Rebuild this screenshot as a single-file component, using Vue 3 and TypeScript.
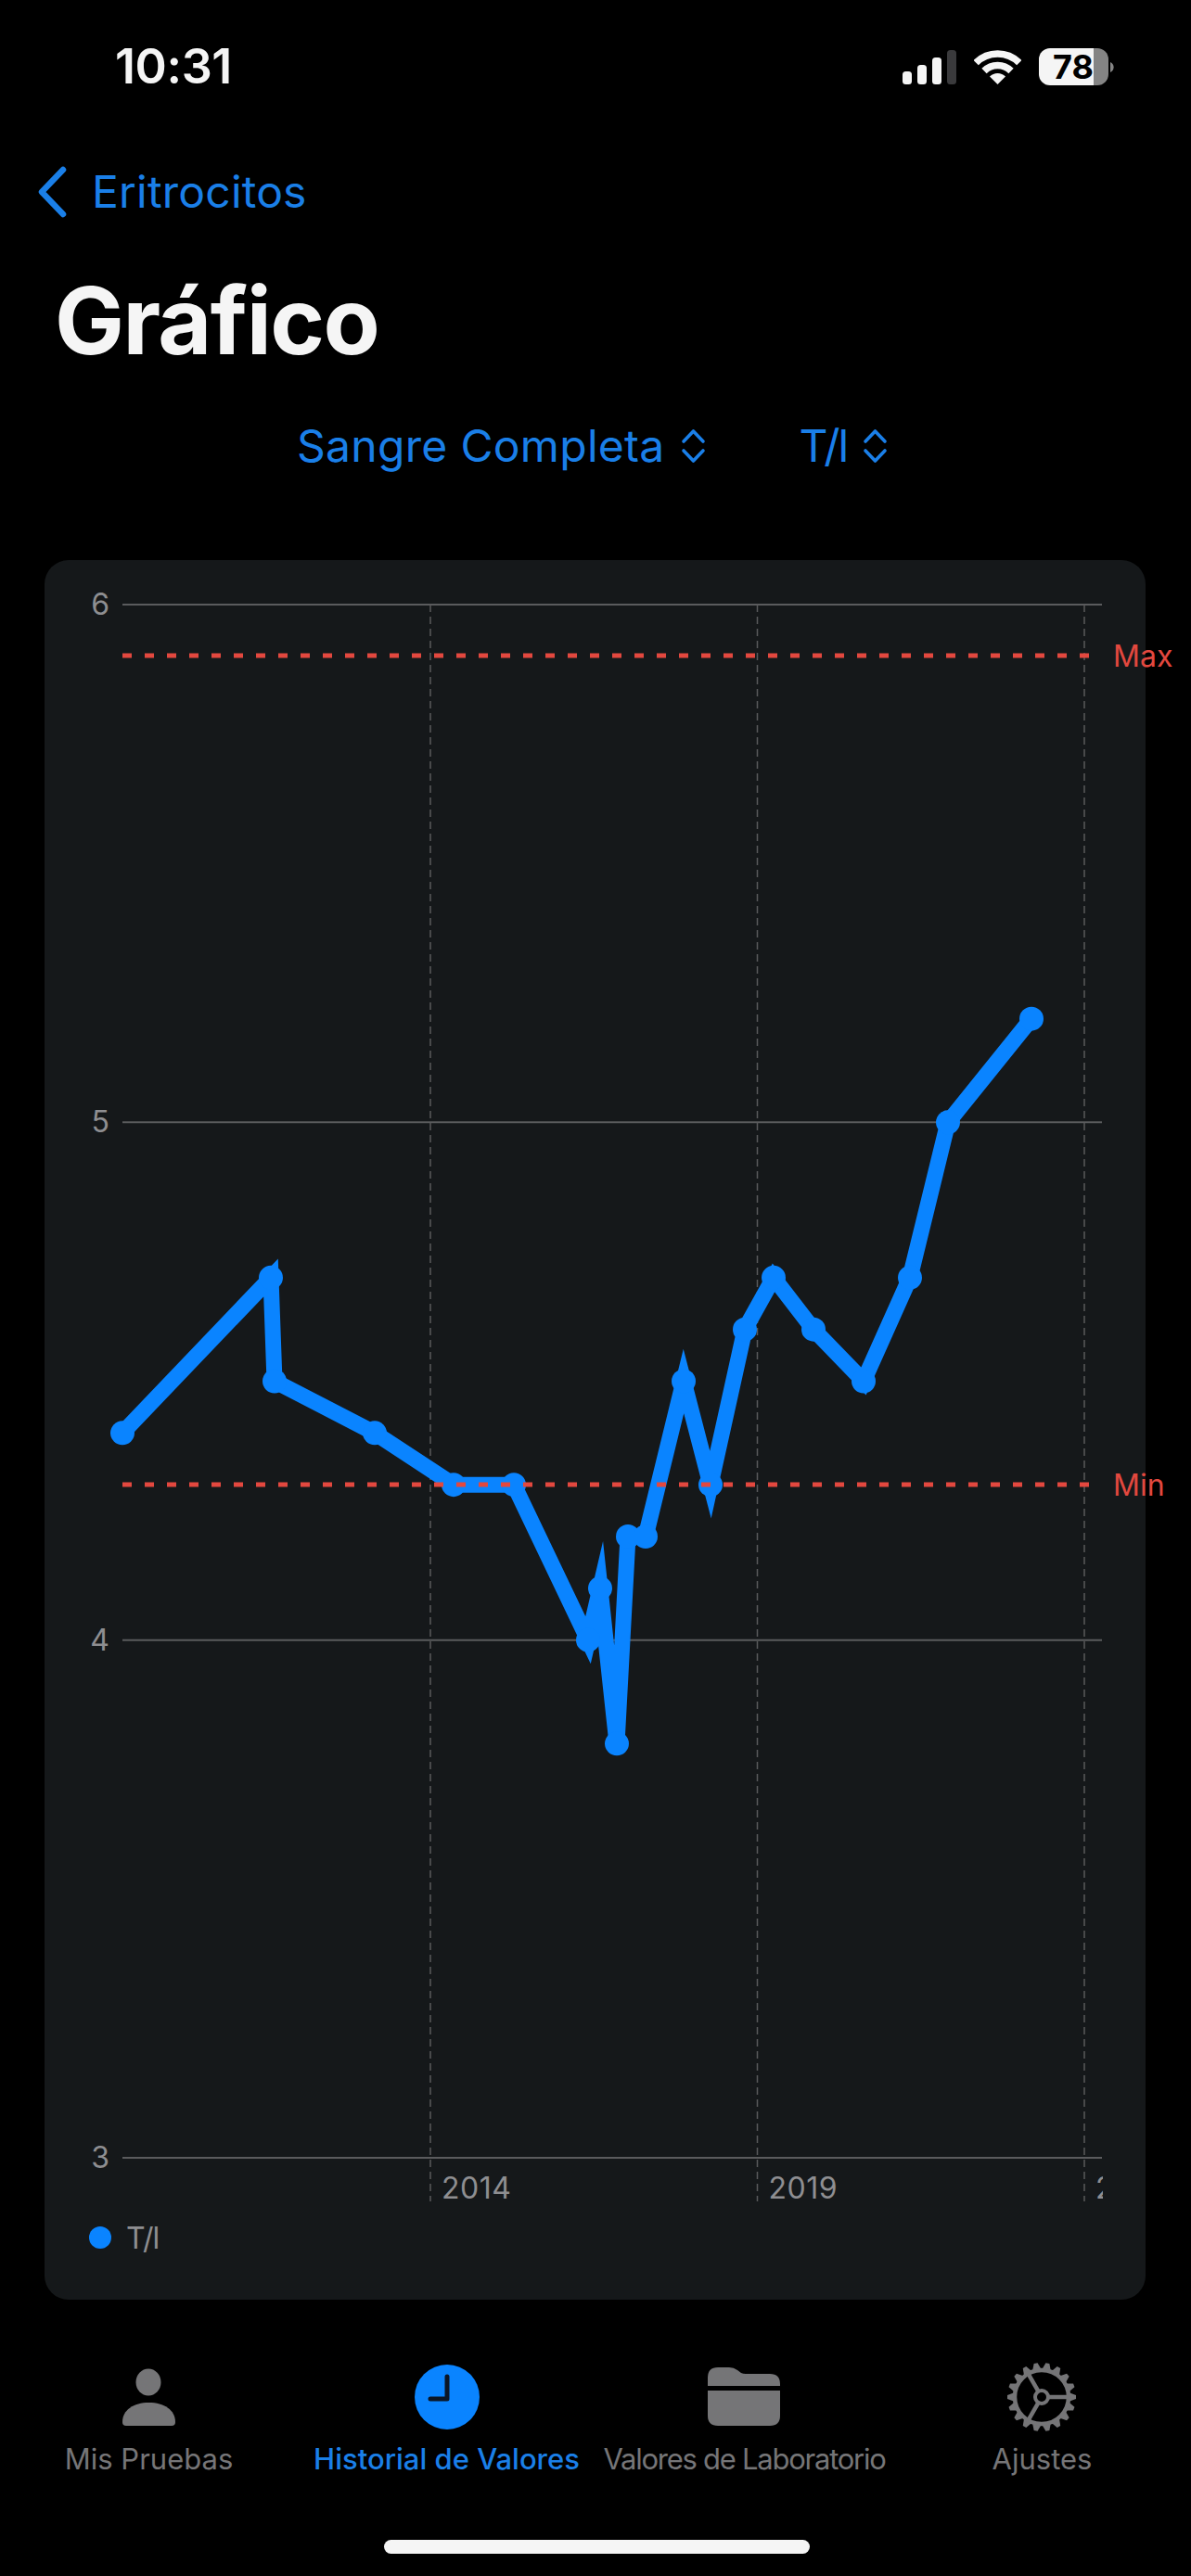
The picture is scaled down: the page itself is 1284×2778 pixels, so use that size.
<script setup lang="ts">
// y axis: 558.33px per unit, value 6 sits at page y 652. Chart svg uses page coordinates.
const yOf = (v: number) => 652 + (6 - v) * 558.33

const samples: [number, number][] = [
  [132, 4.4], [292, 4.7], [296, 4.5], [404, 4.4], [489, 4.3], [554, 4.3],
  [634, 4.0], [647, 4.1], [665, 3.8], [677, 4.2], [696, 4.2], [737, 4.5],
  [766, 4.3], [803, 4.6], [834, 4.7], [877, 4.6], [931, 4.5], [981, 4.7],
  [1022, 5.0], [1112, 5.2],
]
const points = samples.map(([x, v]) => ({ x, y: yOf(v) }))
const linePoints = points.map((p) => `${p.x},${p.y}`).join(' ')

const gridValues = [6, 5, 4, 3]
const yearLines = [
  { x: 464, label: '2014' },
  { x: 816.5, label: '2019' },
  { x: 1169, label: '2024' },
]
const limits = [
  { label: 'Max', y: 707 },
  { label: 'Min', y: 1601 },
]
const teeth = Array.from({ length: 18 }, (_, i) => i * 20)
const spokes = [0, 120, 240]
</script>

<template>
  <div class="screen">
    <header class="status">
      <span class="time">10:31</span>
      <div class="status-icons">
        <svg class="signal" width="58" height="37" viewBox="0 0 58 37">
          <rect x="0" y="23" width="10" height="14" rx="3.5" fill="#f5f5f5" />
          <rect x="16" y="16" width="10" height="21" rx="3.5" fill="#f5f5f5" />
          <rect x="32" y="8" width="10" height="29" rx="3.5" fill="#f5f5f5" />
          <rect x="48" y="0" width="10" height="37" rx="3.5" fill="#3a3a3c" />
        </svg>
        <svg class="wifi" width="51" height="37" viewBox="0 0 51 37">
          <path d="M2.2 13.7A33 33 0 0 1 48.8 13.7" fill="none" stroke="#f5f5f5" stroke-width="7.5" />
          <path d="M11 22.5A20.5 20.5 0 0 1 40 22.5" fill="none" stroke="#f5f5f5" stroke-width="7.5" />
          <path d="M25.5 37L17 28.5A12 12 0 0 1 34 28.5Z" fill="#f5f5f5" />
        </svg>
        <svg class="battery" width="82" height="40" viewBox="0 0 82 40">
          <path d="M12 0H59V40H12A12 12 0 0 1 0 28V12A12 12 0 0 1 12 0Z" fill="#f5f5f5" />
          <path d="M59 0H63A12 12 0 0 1 75 12V28A12 12 0 0 1 63 40H59Z" fill="#848484" />
          <path d="M77 15A6 6 0 0 1 77 26Z" fill="#848484" />
          <text x="37" y="33" text-anchor="middle" class="battery-text">78</text>
        </svg>
      </div>
    </header>

    <nav class="back">
      <svg width="31" height="56" viewBox="0 0 31 56">
        <path d="M27 4L4 28L27 52" fill="none" stroke="#1a7fe8" stroke-width="6.5" stroke-linecap="round" stroke-linejoin="round" />
      </svg>
      <span class="back-label">Eritrocitos</span>
    </nav>

    <h1 class="title">Gráfico</h1>

    <div class="pickers">
      <div class="picker">
        <span class="picker-wide">Sangre Completa</span>
        <svg width="27" height="38" viewBox="0 0 27 38">
          <path d="M3 14L13.5 3L24 14M3 24L13.5 35L24 24" fill="none" stroke="#1a7fe8" stroke-width="3.6" stroke-linecap="round" stroke-linejoin="round" />
        </svg>
      </div>
      <div class="picker">
        <span class="picker-unit">T/l</span>
        <svg width="27" height="38" viewBox="0 0 27 38">
          <path d="M3 14L13.5 3L24 14M3 24L13.5 35L24 24" fill="none" stroke="#1a7fe8" stroke-width="3.6" stroke-linecap="round" stroke-linejoin="round" />
        </svg>
      </div>
    </div>

    <section class="card">
      <svg class="chart" width="1187" height="1780" viewBox="48 604 1187 1780">
        <defs>
          <clipPath id="plot-clip">
            <rect x="48" y="604" width="1141" height="1780" />
          </clipPath>
        </defs>

        <line
          v-for="v in gridValues"
          :key="v"
          x1="132"
          x2="1188"
          :y1="yOf(v)"
          :y2="yOf(v)"
          stroke="#5a5b5d"
          stroke-width="2"
        />
        <text
          v-for="v in gridValues"
          :key="`label-${v}`"
          x="118"
          :y="yOf(v) + 11"
          text-anchor="end"
          class="axis-text"
        >{{ v }}</text>

        <line
          v-for="year in yearLines"
          :key="year.x"
          :x1="year.x"
          :x2="year.x"
          y1="652"
          y2="2374"
          stroke="#59595b"
          stroke-width="1.5"
          stroke-dasharray="8 5"
        />
        <g clip-path="url(#plot-clip)">
          <text
            v-for="year in yearLines"
            :key="year.label"
            :x="year.x + 12"
            y="2371"
            class="axis-text year-text"
          >{{ year.label }}</text>
        </g>

        <polyline
          :points="linePoints"
          fill="none"
          stroke="#0a84ff"
          stroke-width="17"
          stroke-linejoin="miter"
          stroke-miterlimit="10"
        />
        <circle v-for="p in points" :key="p.x" :cx="p.x" :cy="p.y" r="13" fill="#0a84ff" />

        <template v-for="limit in limits" :key="limit.label">
          <line
            x1="132"
            x2="1176"
            :y1="limit.y"
            :y2="limit.y"
            stroke="#e3483f"
            stroke-width="5"
            stroke-dasharray="10 14"
          />
          <text x="1200" :y="limit.y + 12" class="limit-text">{{ limit.label }}</text>
        </template>
      </svg>

      <div class="legend">
        <span class="legend-dot"></span>
        <span class="legend-label">T/l</span>
      </div>
    </section>

    <footer class="tabs">
      <div class="tab">
        <svg width="90" height="74" viewBox="0 0 90 74">
          <ellipse cx="44" cy="21" rx="13.5" ry="14.5" fill="#757577" />
          <path d="M16 64C16 51 28 43 44.5 43S73 51 73 64Q73 68 69 68H20Q16 68 16 64Z" fill="#757577" />
        </svg>
        <span>Mis Pruebas</span>
      </div>
      <div class="tab active">
        <svg width="90" height="74" viewBox="0 0 90 74">
          <circle cx="45" cy="37" r="35" fill="#0a84ff" />
          <path d="M45 15V39H27" fill="none" stroke="#0b1626" stroke-width="5" stroke-linecap="round" stroke-linejoin="round" />
        </svg>
        <span>Historial de Valores</span>
      </div>
      <div class="tab">
        <svg width="90" height="74" viewBox="0 0 90 74">
          <path d="M5 25V16Q5 5 16 5H28Q33 5 37 8L41 11Q43 12 46 12H72Q83 12 83 23V25Z" fill="#757577" />
          <path d="M5 30H83V57Q83 68 72 68H16Q5 68 5 57Z" fill="#757577" />
        </svg>
        <span class="tab-tight">Valores de Laboratorio</span>
      </div>
      <div class="tab">
        <svg width="90" height="74" viewBox="0 0 90 74">
          <g transform="translate(44 37)" fill="#757577" stroke="#757577">
            <polygon
              v-for="a in teeth"
              :key="a"
              points="-5,-29 -2,-37 2,-37 5,-29"
              :transform="`rotate(${a + 10})`"
              stroke="none"
            />
            <circle r="29" fill="none" stroke-width="4.5" />
            <circle r="7" fill="none" stroke-width="4" />
            <line
              v-for="a in spokes"
              :key="a"
              x1="8"
              x2="29"
              y1="0"
              y2="0"
              stroke-width="4.5"
              :transform="`rotate(${a})`"
            />
          </g>
        </svg>
        <span>Ajustes</span>
      </div>
    </footer>

    <div class="home-bar"></div>
  </div>
</template>

<style>
html,
body {
  margin: 0;
  background: #000;
}
</style>

<style scoped>
.screen {
  width: 1284px;
  height: 2778px;
  background: #000;
  font-family: Inter, "Liberation Sans", sans-serif;
  overflow: hidden;
}

.status {
  height: 110px;
  display: flex;
  justify-content: space-between;
  box-sizing: border-box;
  padding: 42px 82px 0 124px;
}

.time {
  color: #f5f5f5;
  font-size: 52px;
  font-weight: 600;
  line-height: 60px;
  letter-spacing: -0.4px;
}

.status-icons {
  display: flex;
  align-items: flex-start;
  padding-top: 10px;
}

.signal {
  margin-top: 2px;
}

.wifi {
  margin: 2px 19px 0;
}

.battery {
  overflow: visible;
}

.battery-text {
  font-size: 36px;
  font-weight: 700;
  fill: #000;
}

.back {
  display: flex;
  align-items: center;
  gap: 27px;
  height: 60px;
  margin-top: 67px;
  padding-left: 41px;
}

.back-label {
  color: #1a7fe8;
  font-size: 48px;
  line-height: 60px;
  letter-spacing: 0.2px;
}

.title {
  margin: 59px 0 0;
  padding-left: 59px;
  color: #f5f5f5;
  font-size: 100px;
  font-weight: 700;
  line-height: 100px;
  letter-spacing: -1.6px;
}

.pickers {
  display: flex;
  gap: 101px;
  height: 60px;
  margin-top: 55px;
  padding-left: 320px;
}

.picker {
  display: flex;
  align-items: center;
  gap: 17px;
  color: #1a7fe8;
  font-size: 48px;
  line-height: 60px;
}

.picker-wide {
  letter-spacing: 0.3px;
}

.picker-unit {
  letter-spacing: -2px;
}

.card {
  width: 1187px;
  height: 1876px;
  margin: 93px 0 0 48px;
  background: #15181a;
  border-radius: 26px;
}

.chart {
  display: block;
  overflow: visible;
}

.axis-text {
  font-size: 32px;
  fill: #8e8e91;
}

.year-text {
  letter-spacing: 0.5px;
}

.limit-text {
  font-size: 32px;
  fill: #e3483f;
}

.legend {
  display: flex;
  align-items: center;
  gap: 16px;
  height: 40px;
  margin-top: 9px;
  padding-left: 48px;
  color: #8e8e91;
  font-size: 32px;
}

.legend-label {
  letter-spacing: -1px;
}

.legend-dot {
  width: 24px;
  height: 24px;
  border-radius: 50%;
  background: #0a84ff;
}

.tabs {
  display: grid;
  grid-template-columns: repeat(4, 321px);
  margin-top: 68px;
}

.tab {
  display: flex;
  flex-direction: column;
  align-items: center;
  gap: 12px;
  color: #757577;
  font-size: 31px;
  line-height: 36px;
  white-space: nowrap;
}

.tab svg {
  display: block;
}

.tab.active {
  color: #1a7fe8;
  font-weight: 500;
}

.tab-tight {
  letter-spacing: -1.25px;
}

.home-bar {
  width: 459px;
  height: 15px;
  margin: 69px 0 0 414px;
  border-radius: 8px;
  background: #f5f5f5;
}
</style>
